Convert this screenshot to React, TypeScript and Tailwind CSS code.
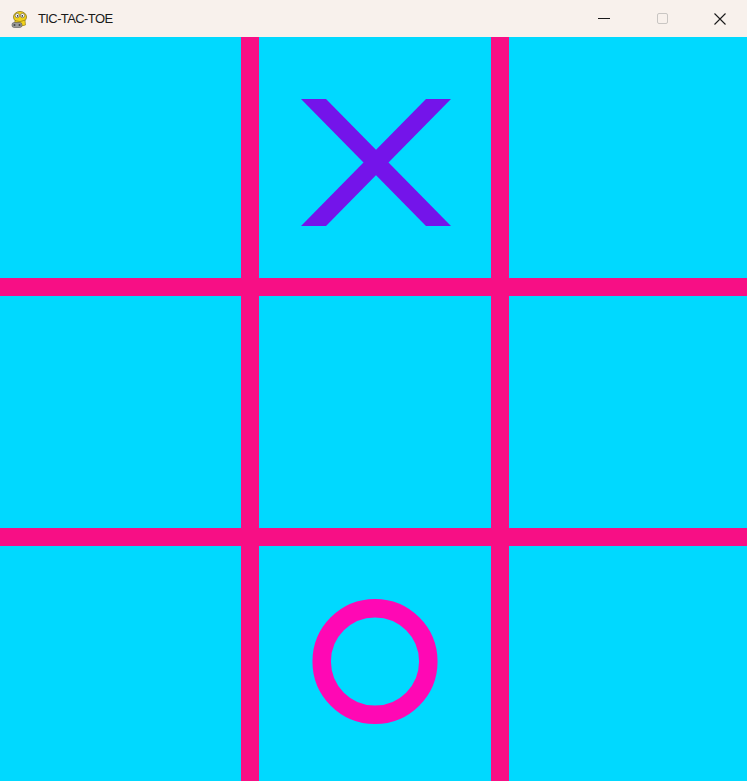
const board = [
  ["", "X", ""],
  ["", "", ""],
  ["", "O", ""],
];

function SnakeIcon() {
  return (
    <svg width="18" height="19" viewBox="0 0 18 19">
      <ellipse cx="9" cy="7" rx="6.5" ry="5.5" fill="#f2d21a" stroke="#8a7412" strokeWidth="0.8" />
      <circle cx="6.3" cy="5.6" r="2.1" fill="#fff" stroke="#555" strokeWidth="0.6" />
      <circle cx="11.5" cy="5.6" r="2.1" fill="#fff" stroke="#555" strokeWidth="0.6" />
      <circle cx="6.6" cy="5.9" r="0.8" fill="#222" />
      <circle cx="11.3" cy="5.9" r="0.8" fill="#222" />
      <path d="M4 10.5 Q9 13 14 10 L14.5 15 Q9 17.5 3.5 15 Z" fill="#f2d21a" stroke="#8a7412" strokeWidth="0.6" />
      <rect x="1" y="12.5" width="10" height="5" rx="2.2" fill="#9a9a9a" stroke="#555" strokeWidth="0.6" />
      <circle cx="3.5" cy="15" r="1" fill="#444" />
      <circle cx="8.5" cy="15" r="1" fill="#444" />
    </svg>
  );
}

function Cross() {
  return (
    <svg width="232" height="241" viewBox="0 0 232 241">
      <polygon points="42,62 67,62 192,189 167,189" fill="#7414ea" />
      <polygon points="167,62 192,62 67,189 42,189" fill="#7414ea" />
    </svg>
  );
}

function Ring() {
  return (
    <svg width="232" height="241" viewBox="0 0 232 241">
      <circle cx="116" cy="115.5" r="53.3" fill="none" stroke="#ff08b4" strokeWidth="18.5" />
    </svg>
  );
}

export default function App() {
  return (
    <div className="flex h-[781px] w-[747px] flex-col overflow-hidden bg-[#00d9ff]">
      <div className="flex h-[37px] shrink-0 items-center bg-[#f8f1ec] text-[#1a1a1a]">
        <div className="ml-[11px] mt-[2px] flex h-[19px] w-[18px] items-center">
          <SnakeIcon />
        </div>
        <span
          className="ml-[9px] mt-[1px] text-[13px] tracking-[-0.6px]"
          style={{ fontFamily: "'Segoe UI', 'Liberation Sans', sans-serif" }}
        >
          TIC-TAC-TOE
        </span>
        <div className="ml-auto mr-[-2px] flex h-full">
          <div className="flex w-[58px] items-center justify-center">
            <div className="h-px w-[12px] bg-[#1a1a1a]" />
          </div>
          <div className="flex w-[58px] items-center justify-center">
            <div className="h-[11px] w-[11px] rounded-[2px] border border-[#c9c6c3]" />
          </div>
          <div className="flex w-[58px] items-center justify-center">
            <svg width="12" height="12" viewBox="0 0 12 12">
              <path d="M0.5 0.5 L11.5 11.5 M11.5 0.5 L0.5 11.5" stroke="#1a1a1a" strokeWidth="1.1" />
            </svg>
          </div>
        </div>
      </div>

      <div className="grid w-[750px] shrink-0 grid-cols-[241px_232px_241px] grid-rows-[241px_232px_241px] gap-[18px] bg-[#f70f85]">
        {board.flat().map((cell, i) => (
          <div key={i} className="flex items-start justify-center overflow-hidden bg-[#00d9ff]">
            {cell === "X" && <Cross />}
            {cell === "O" && <Ring />}
          </div>
        ))}
      </div>
    </div>
  );
}
